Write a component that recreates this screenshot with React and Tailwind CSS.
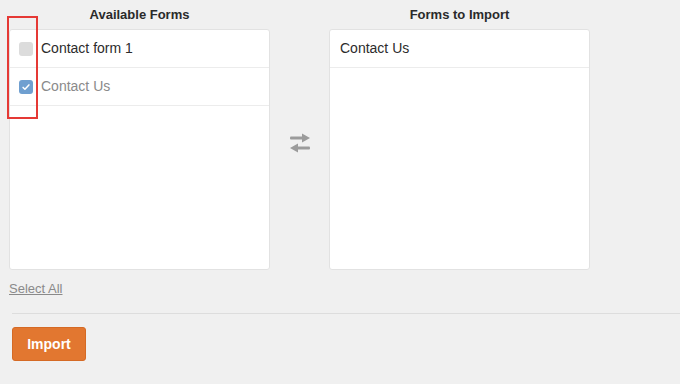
import { useState } from 'react';

const Checkbox = ({ checked, onChange }) => (
  <button
    onClick={onChange}
    className={`w-[14px] h-[14px] rounded-[3px] flex items-center justify-center ${checked ? 'bg-[#6f9fd0]' : 'bg-[#dcdcdc]'}`}
  >
    {checked && (
      <svg viewBox="0 0 12 12" className="w-[10px] h-[10px]" fill="none" stroke="white" strokeWidth={1.8} strokeLinecap="round" strokeLinejoin="round">
        <path d="M2.5 6.5l2.2 2.2L9.5 3.5" />
      </svg>
    )}
  </button>
);

const App = () => {
  const [forms, setForms] = useState([
    { name: 'Contact form 1', selected: false },
    { name: 'Contact Us', selected: true },
  ]);

  const toggle = (i) => {
    setForms(forms.map((f, j) => (j === i ? { ...f, selected: !f.selected } : f)));
  };

  const toImport = forms.filter((f) => f.selected);

  return (
    <div className="relative w-[680px] h-[384px] bg-[#f0f0f0] font-['Liberation_Sans',sans-serif] text-[#2c2c2c] overflow-hidden">
      <div className="flex items-start pl-[9px] pt-[6px]">
        {/* Available */}
        <div className="w-[261px]">
          <h3 className="text-[13px] font-semibold text-center leading-[18px] mb-[5px] text-[#2a2a2a]">Available Forms</h3>
          <div className="h-[241px] bg-white rounded-[3px] border border-[#e2e2e2]">
            {forms.map((f, i) => (
              <div key={f.name} className="h-[38px] flex items-center gap-[8px] pl-[9px] border-b border-[#ececec]">
                <Checkbox checked={f.selected} onChange={() => toggle(i)} />
                <span className={`text-[14px] ${f.selected ? 'text-[#8a8a8a]' : 'text-[#2c2c2c]'}`}>{f.name}</span>
              </div>
            ))}
          </div>
          <button className="mt-[10px] text-[13px] text-[#8a8a8a] underline leading-[18px]">Select All</button>
        </div>

        {/* Swap icon */}
        <div className="w-[59px] flex justify-center pt-[127px]">
          <svg viewBox="0 0 22 20" className="w-[22px] h-[20px]" fill="#9b9b9b">
            <rect x="1" y="3.5" width="14" height="3" rx="1" />
            <path d="M13 0.5L21 5l-8 4.5z" />
            <rect x="7" y="13.5" width="14" height="3" rx="1" />
            <path d="M9 10.5L1 15l8 4.5z" />
          </svg>
        </div>

        {/* To import */}
        <div className="w-[261px]">
          <h3 className="text-[13px] font-semibold text-center leading-[18px] mb-[5px] text-[#2a2a2a]">Forms to Import</h3>
          <div className="h-[241px] bg-white rounded-[3px] border border-[#e2e2e2]">
            {toImport.map((f) => (
              <div key={f.name} className="h-[38px] flex items-center pl-[10px] border-b border-[#ececec]">
                <span className="text-[14px]">{f.name}</span>
              </div>
            ))}
          </div>
        </div>
      </div>

      <div className="ml-[12px] mt-[13px] border-t border-[#dddddd]" />

      <button className="ml-[12px] mt-[13px] w-[74px] h-[34px] rounded-[3px] bg-[#e27730] border border-[#d56a25] text-white text-[14px] font-bold">
        Import
      </button>

      {/* highlight overlay */}
      <div className="absolute left-[7px] top-[16px] w-[31px] h-[103px] border-2 border-[#e53935] pointer-events-none" />
    </div>
  );
};

export default App;
